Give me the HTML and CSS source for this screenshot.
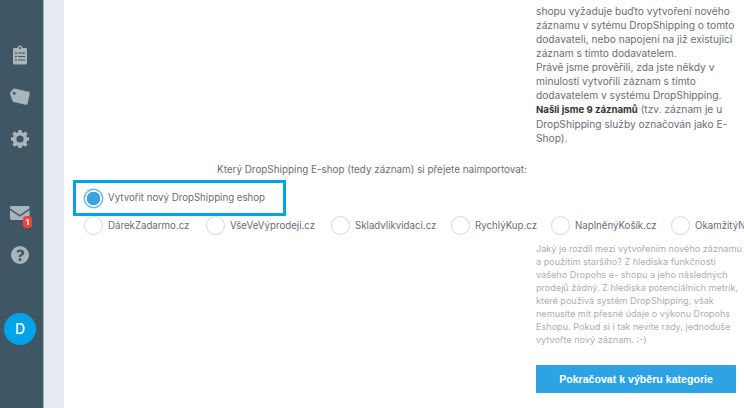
FILE: index.html
```html
<!DOCTYPE html>
<html lang="cs">
<head>
  <meta charset="UTF-8">
  <title>Import dodavatele</title>
  <link rel="stylesheet" href="styles.css">
</head>
<body>
  <nav class="sidebar">
    <div class="ikony">
      <svg class="ikona" viewBox="0 0 20 20"><path fill-rule="evenodd" d="M4.500 3H7.500C7.700 1.600 8.700 .6 10 .6S12.300 1.600 12.500 3H15.500C16.400 3 17 3.600 17 4.500V18C17 18.900 16.400 19.500 15.500 19.500H4.500C3.600 19.500 3 18.900 3 18V4.500C3 3.600 3.600 3 4.500 3ZM10 2A1.100 1.100 0 1 0 10 4.200 1.100 1.100 0 1 0 10 2ZM5.200 7.200V8.800H6.800V7.200ZM8 7.400V8.600H15V7.400ZM5.200 10.700V12.300H6.800V10.700ZM8 10.900V12.100H15V10.900ZM5.200 14.200V15.800H6.800V14.200ZM8 14.400V15.600H15V14.400Z"/></svg>
      <svg class="ikona" viewBox="0 0 20 20"><path fill-rule="evenodd" d="M.3 5.500 3 2.200C3.400 1.700 3.900 1.500 4.500 1.600L18.700 4.700C19.600 5 20 5.700 19.800 6.500L17.600 16.500C17.400 17.400 16.600 17.900 15.700 17.700L3.800 15C3.200 14.900 2.800 14.500 2.600 14L.1 7C-.1 6.400 0 5.900.3 5.500ZM4.200 4.700A1.500 1.500 0 1 0 4.200 7.700 1.500 1.500 0 1 0 4.200 4.700Z"/></svg>
      <svg class="ikona" viewBox="0 0 20 20"><path fill-rule="evenodd" transform="translate(1 1) scale(.9)" d="M8.300 0H11.700L12.200 2.500 13.900 3.200 16 1.800 18.400 4.200 17 6.300 17.700 8 20 8.400V11.800L17.700 12.300 17 14 18.400 16.100 16 18.500 13.900 17.100 12.200 17.800 11.700 20H8.300L7.800 17.800 6.100 17.100 4 18.500 1.600 16.100 3 14 2.300 12.300 0 11.800V8.400L2.300 8 3 6.300 1.600 4.200 4 1.800 6.100 3.200 7.800 2.500ZM10 6A4 4 0 1 0 10 14 4 4 0 1 0 10 6Z"/></svg>
    </div>
    <div class="ikony">
      <div class="obalka">
        <svg class="ikona" viewBox="0 0 20 20"><path d="M1.800 3H17.800C18.800 3 19.600 3.700 19.600 4.700V5.300L9.800 12 0 5.300V4.700C0 3.700.8 3 1.800 3ZM0 7 9.800 13.800 19.600 7V15.300C19.600 16.300 18.800 17 17.800 17H1.800C.8 17 0 16.300 0 15.300Z"/></svg>
        <span class="odznak">1</span>
      </div>
      <svg class="ikona" viewBox="0 0 20 20"><path fill-rule="evenodd" d="M10 1A9 9 0 1 0 10 19 9 9 0 1 0 10 1ZM10.300 4.500C12.500 4.500 14.300 5.800 14.300 7.800 14.300 9.300 13.300 10 12.300 10.600 11.500 11.100 11.200 11.400 11.200 12.100H8.700C8.700 10.700 9.200 9.900 10.300 9.200 11.100 8.700 11.700 8.400 11.700 7.800 11.700 7.100 11 6.700 10.200 6.700 9.300 6.700 8.700 7.200 8.100 8L6.400 6.700C7.300 5.300 8.500 4.500 10.300 4.500ZM10 12.900A1.500 1.500 0 1 1 10 15.900 1.500 1.500 0 1 1 10 12.900Z"/></svg>
    </div>
    <div class="avatar">D</div>
  </nav>
  <div class="pruh"></div>

  <main class="obsah">
    <div class="sloupec popis">
      shopu vyžaduje buďto vytvoření nového<br>
      záznamu v sytému DropShipping o tomto<br>
      dodavateli, nebo napojení na již existující<br>
      záznam s tímto dodavatelem.<br>
      Právě jsme prověřili, zda jste někdy v<br>
      minulosti vytvořili záznam s tímto<br>
      dodavatelem v systému DropShipping.<br>
      <b>Našli jsme 9 záznamů</b> (tzv. záznam je u<br>
      DropShipping služby označován jako E-<br>
      Shop).
    </div>

    <div class="otazka">Který DropShipping E-shop (tedy záznam) si přejete naimportovat:</div>

    <label class="volba-nova">
      <span class="radio vybrane"></span>
      Vytvořit nový DropShipping eshop
    </label>

    <div class="volby">
      <label class="volba"><span class="radio"></span>DárekZadarmo.cz</label>
      <label class="volba"><span class="radio"></span>VšeVeVýprodeji.cz</label>
      <label class="volba"><span class="radio"></span>Skladvlikvidaci.cz</label>
      <label class="volba"><span class="radio"></span>RychlýKup.cz</label>
      <label class="volba"><span class="radio"></span>NaplněnýKošík.cz</label>
      <label class="volba"><span class="radio"></span>OkamžitýN</label>
    </div>

    <div class="sloupec napoveda">
      Jaký je rozdíl mezi vytvořením nového záznamu<br>
      a použitím staršího? Z hlediska funkčnosti<br>
      vašeho Dropohs e- shopu a jeho následných<br>
      prodejů žádný. Z hlediska potenciálních metrik,<br>
      které používá systém DropShipping, však<br>
      nemusíte mít přesné údaje o výkonu Dropohs<br>
      Eshopu. Pokud si i tak nevíte rady, jednoduše<br>
      vytvořte nový záznam. :-)
    </div>

    <button class="pokracovat">Pokračovat k výběru kategorie</button>
  </main>
</body>
</html>
```

FILE: styles.css
```css
:root {
  --color-panel: #3f5765;
  --color-ikona: #a9b4bb;
  --color-modra: #00a3e8;
  --color-text: #6c6c75;
}

html, body {
  height: 100%;
}

body {
  margin: 0;
  display: flex;
  overflow: hidden;
  font-family: 'Inter', 'Noto Sans', sans-serif;
  font-size: 9.7px;
  line-height: 14px;
  color: var(--color-text);
  background: white;
}

/* PANEL */
.sidebar {
  width: 40px;
  flex: none;
  display: flex;
  flex-direction: column;
  align-items: center;
  padding: 45px 3px 0 0;
  background: var(--color-panel);
  border-right: 1px solid #a3adb4;
}

.ikony {
  display: flex;
  flex-direction: column;
  align-items: center;
  gap: 22px;
  margin-bottom: 54px;
}

.ikony + .ikony {
  margin-bottom: 48px;
}

.ikona {
  display: block;
  width: 20px;
  height: 20px;
  fill: var(--color-ikona);
}

.obalka {
  position: relative;
}

.odznak {
  position: absolute;
  right: -2px;
  bottom: -5px;
  width: 9px;
  height: 12px;
  border-radius: 3px;
  background: #f0423c;
  color: white;
  font-size: 8px;
  font-weight: bold;
  line-height: 12px;
  text-align: center;
}

.avatar {
  width: 32px;
  height: 32px;
  border-radius: 50%;
  background: var(--color-modra);
  color: white;
  font-size: 14px;
  font-weight: 500;
  line-height: 32px;
  text-align: center;
}

.pruh {
  width: 20px;
  flex: none;
  background: #e6ebf2;
}

/* OBSAH */
.obsah {
  flex: 1;
  min-width: 0;
  padding: 4px 0 0 9px;
  overflow: hidden;
}

.sloupec {
  margin-left: 463px;
  white-space: nowrap;
}

.popis {
  font-size: 10.2px;
}

.popis b {
  color: #333;
  font-size: 9.6px;
}

.otazka {
  margin-top: 17px;
  margin-left: 144px;
  font-size: 9.9px;
  white-space: nowrap;
}

.volba-nova {
  display: flex;
  align-items: center;
  gap: 5px;
  width: 199px;
  height: 30px;
  margin-top: 4px;
  padding-left: 8px;
  border: 3px solid var(--color-modra);
}

.volby {
  display: grid;
  grid-template-columns: 122px 125px 120px 100px 120px 120px;
  padding-left: 11px;
  white-space: nowrap;
}

.volba {
  display: flex;
  align-items: center;
  gap: 5px;
  height: 19px;
}

.radio {
  width: 19px;
  height: 19px;
  flex: none;
  box-sizing: border-box;
  border: 1px solid #d8d8d8;
  border-radius: 50%;
  background: white;
}

.radio.vybrane {
  border: 1.5px solid #3ba1e0;
  box-shadow: 0 0 2px #3ba1e0;
  background: radial-gradient(circle, #3ba1e0 0 6.5px, white 7px);
}

.napoveda {
  margin-top: 7px;
  color: #adadb5;
  font-size: 9.1px;
  line-height: 13px;
}

.pokracovat {
  display: block;
  width: 200px;
  height: 28px;
  margin: 19px 0 0 463px;
  border: none;
  background: #2ea3e3;
  color: white;
  font-family: 'Liberation Sans', sans-serif;
  font-size: 10.6px;
  font-weight: bold;
}
```
